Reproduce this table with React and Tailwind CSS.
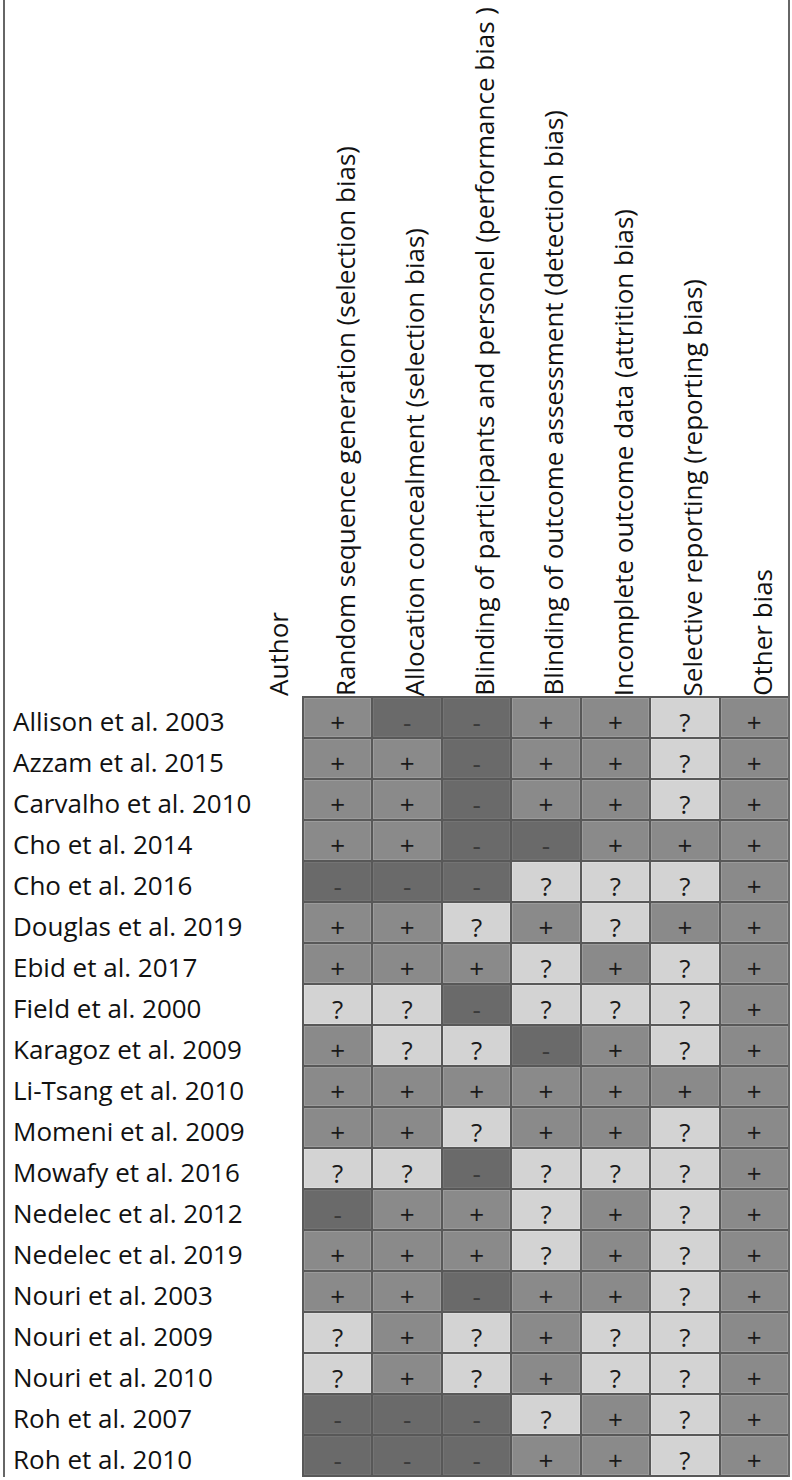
import React from 'react';

const headers = [
  'Random sequence generation (selection bias)',
  'Allocation concealment (selection bias)',
  'Blinding of participants and personel (performance bias )',
  'Blinding of outcome assessment (detection bias)',
  'Incomplete outcome data (attrition bias)',
  'Selective reporting (reporting bias)',
  'Other bias',
];

const rows = [
  ['Allison et al. 2003', '+--++?+'],
  ['Azzam et al. 2015', '++-++?+'],
  ['Carvalho et al. 2010', '++-++?+'],
  ['Cho et al. 2014', '++--+++'],
  ['Cho et al. 2016', '---???+'],
  ['Douglas et al. 2019', '++?+?++'],
  ['Ebid et al. 2017', '+++?+?+'],
  ['Field et al. 2000', '??-???+'],
  ['Karagoz et al. 2009', '+??-+?+'],
  ['Li-Tsang et al. 2010', '+++++++'],
  ['Momeni et al. 2009', '++?++?+'],
  ['Mowafy et al. 2016', '??-???+'],
  ['Nedelec et al. 2012', '-++?+?+'],
  ['Nedelec et al. 2019', '+++?+?+'],
  ['Nouri et al. 2003', '++-++?+'],
  ['Nouri et al. 2009', '?+?+??+'],
  ['Nouri et al. 2010', '?+?+??+'],
  ['Roh et al. 2007', '---?+?+'],
  ['Roh et al. 2010', '---++?+'],
];

// low / unclear / high risk shading
const cellStyle = {
  '+': 'bg-[#8a8a8a] border-[#9b9b9b] text-[#1a1a1a]',
  '-': 'bg-[#6a6a6a] border-[#747474] text-[#3a3a3a]',
  '?': 'bg-[#d3d3d3] border-[#dddddd] text-[#1a1a1a]',
};

const Cell = ({ mark }) => (
  <div className={`flex items-center justify-center border pt-[8px] text-[26px] leading-none ${cellStyle[mark]}`}>
    {mark}
  </div>
);

const App = () => {
  return (
    <div className="w-[792px] h-[1480px] bg-white pl-[3px] font-['Open_Sans',sans-serif] text-[#111]">
      <div className="w-[787px] h-[1477px] border-x-2 border-[#666]">
        {/* rotated column headers */}
        <div className="flex h-[696px] items-end">
          <div className="w-[297px] flex justify-end pr-[11px]">
            <span className="[writing-mode:vertical-rl] rotate-180 whitespace-nowrap text-[26px] leading-[26px]">Author</span>
          </div>
          <div className="flex-1 grid grid-cols-7 gap-x-[2px] pl-[2px]">
            {headers.map((h) => (
              <div key={h} className="flex items-end pl-[28px]">
                <span className="[writing-mode:vertical-rl] rotate-180 whitespace-nowrap text-[26px] leading-[26px]">{h}</span>
              </div>
            ))}
          </div>
        </div>

        {/* study rows */}
        <div className="flex">
          <div className="w-[297px] flex flex-col gap-[2px] pt-[2px]">
            {rows.map(([name]) => (
              <div key={name} className="h-[39px] flex items-center pl-[8px] pt-[6px] text-[26px] leading-none whitespace-nowrap">
                {name}
              </div>
            ))}
          </div>
          <div className="flex-1 grid grid-cols-7 auto-rows-[39px] gap-[2px] bg-[#585858] pl-[2px] py-[2px]">
            {rows.map(([name, marks]) =>
              marks.split('').map((m, i) => <Cell key={name + i} mark={m} />)
            )}
          </div>
        </div>
      </div>
    </div>
  );
};

export default App;
